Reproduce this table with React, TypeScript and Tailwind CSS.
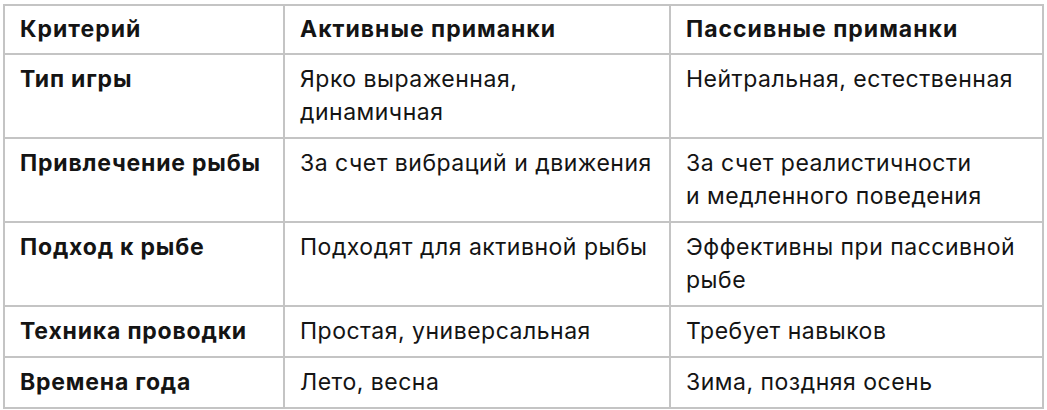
const rows: [string, string, string][] = [
  ['Тип игры', 'Ярко выраженная, динамичная', 'Нейтральная, естественная'],
  ['Привлечение рыбы', 'За счет вибраций и движения', 'За счет реалистичности и медленного поведения'],
  ['Подход к рыбе', 'Подходят для активной рыбы', 'Эффективны при пассивной рыбе'],
  ['Техника проводки', 'Простая, универсальная', 'Требует навыков'],
  ['Времена года', 'Лето, весна', 'Зима, поздняя осень'],
];

const twoLine: Record<string, [string, string]> = {
  'Ярко выраженная, динамичная': ['Ярко выраженная,', 'динамичная'],
  'За счет реалистичности и медленного поведения': ['За счет реалистичности', 'и медленного поведения'],
  'Эффективны при пассивной рыбе': ['Эффективны при пассивной', 'рыбе'],
};

function CellText({ text }: { text: string }) {
  const parts = twoLine[text];
  if (!parts) return <>{text}</>;
  return (
    <>
      {parts[0]}
      <br />
      {parts[1]}
    </>
  );
}

export default function App() {
  return (
    <div
      className="w-[1047px] h-[410px] bg-white pt-[4px] pl-[3px] text-[#141414]"
      style={{ fontFamily: 'Inter, sans-serif' }}
    >
      <table className="border-collapse text-[23px] leading-[33px] tracking-[0.5px]">
        <colgroup>
          <col className="w-[280px]" />
          <col className="w-[386px]" />
          <col className="w-[373px]" />
        </colgroup>
        <thead>
          <tr>
            <th className="border-2 border-[#c4c4c4] px-[15px] py-[7px] text-left align-top font-bold tracking-[1px]">Критерий</th>
            <th className="border-2 border-[#c4c4c4] px-[15px] py-[7px] text-left align-top font-bold tracking-[1px]">Активные приманки</th>
            <th className="border-2 border-[#c4c4c4] px-[15px] py-[7px] text-left align-top font-bold tracking-[1px]">Пассивные приманки</th>
          </tr>
        </thead>
        <tbody>
          {rows.map(([a, b, c]) => (
            <tr key={a}>
              <td className="border-2 border-[#c4c4c4] px-[15px] pt-[8px] pb-[8px] align-top font-bold tracking-[0.8px]">{a}</td>
              <td className="border-2 border-[#c4c4c4] px-[15px] pt-[8px] pb-[8px] align-top">
                <CellText text={b} />
              </td>
              <td className="border-2 border-[#c4c4c4] px-[15px] pt-[8px] pb-[8px] align-top">
                <CellText text={c} />
              </td>
            </tr>
          ))}
        </tbody>
      </table>
    </div>
  );
}
